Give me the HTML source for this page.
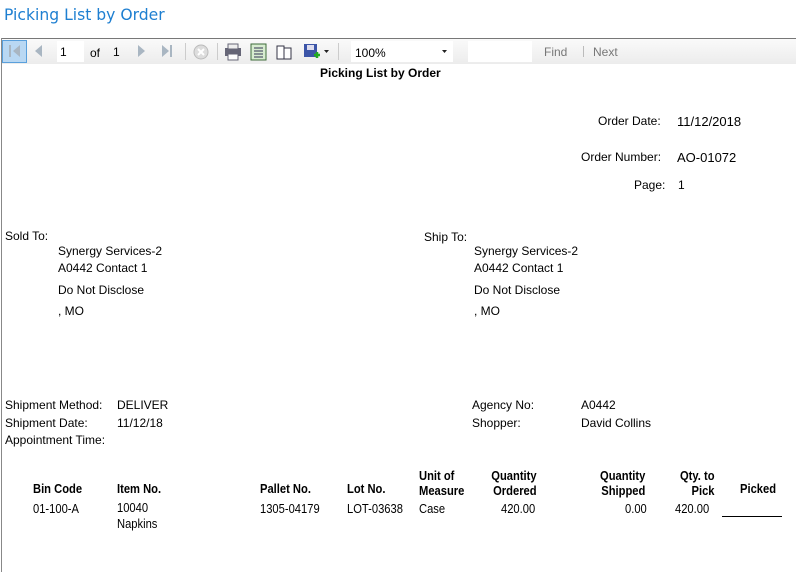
<!DOCTYPE html>
<html><head><meta charset="utf-8"><style>
body{margin:0;width:796px;height:572px;background:#fff;font-family:"Liberation Sans",Arial,sans-serif;position:relative;overflow:hidden;color:#000}
.a{position:absolute;white-space:nowrap}
.t{font-size:12px}
.n{font-size:13px;display:inline-block;transform:scaleX(.86);transform-origin:left top}
.nb{font-weight:bold}
</style></head><body>
<div class="a" style="left:4px;top:6px;color:#1e7fd1;font-family:'DejaVu Sans','Liberation Sans',sans-serif;font-size:15.6px">Picking List by Order</div>
<div class="a" style="left:1px;top:38px;width:795px;height:1px;background:#777"></div>
<div class="a" style="left:1px;top:38px;width:1px;height:534px;background:#888"></div>
<div class="a" style="left:2px;top:39px;width:794px;height:25px;background:linear-gradient(#fafafa,#ececec)"></div>
<div class="a" style="left:2px;top:40px;width:25px;height:23px;background:#b9d8f3;border:1px solid #5aa0dc;box-sizing:border-box"></div>
<svg class="a" style="left:0;top:39px" width="796" height="26">
<g fill="#a9b6c2"><rect x="9" y="6" width="2" height="12"/><path d="M20 6 L13 12 L20 18Z"/><path d="M42 6 L35 12 L42 18Z"/><path d="M138 6 L145 12 L138 18Z"/><path d="M162 6 L169 12 L162 18Z"/><rect x="170" y="6" width="2" height="12"/></g>
<rect x="57" y="2" width="27" height="21" fill="#fff"/>
<g stroke="#ccc"><line x1="185.5" y1="4" x2="185.5" y2="21"/><line x1="217.5" y1="4" x2="217.5" y2="21"/><line x1="338.5" y1="4" x2="338.5" y2="21"/></g>
<circle cx="201" cy="13" r="7" fill="#ddd" stroke="#bbb"/><path d="M198 10l6 6M204 10l-6 6" stroke="#fff" stroke-width="2"/>
<rect x="225" y="9" width="16" height="8" fill="#667" /><rect x="228" y="5" width="10" height="5" fill="#eee" stroke="#667"/><rect x="228" y="15" width="10" height="6" fill="#fff" stroke="#667"/>
<rect x="251" y="5" width="15" height="16" fill="#d7ecd0" stroke="#3d6b3a"/><path d="M254 9h9M254 12h9M254 15h9M254 18h9" stroke="#335"/>
<path d="M277 7h7v13h-7zM284 9h7v11h-7z" fill="#fff" stroke="#334"/>
<rect x="304" y="5" width="13" height="13" fill="#3c55a8"/><rect x="307" y="6" width="7" height="5" fill="#dde"/><path d="M314 16h6M317 13v6" stroke="#2a2" stroke-width="2.5"/>
<path d="M324 11h5l-2.5 3z" fill="#222"/>
<rect x="351" y="2" width="102" height="21" fill="#fff"/><path d="M442 11h5l-2.5 3z" fill="#222"/>
<rect x="468" y="2" width="64" height="21" fill="#fff"/>
<line x1="583.5" y1="7" x2="583.5" y2="18" stroke="#bbb"/>
</svg>
<div class="a t" style="left:60px;top:45px">1</div>
<div class="a t" style="left:90px;top:46px">of</div>
<div class="a t" style="left:113px;top:45px">1</div>
<div class="a t" style="left:355px;top:46px">100%</div>
<div class="a t" style="left:544px;top:45px;color:#777">Find</div>
<div class="a t" style="left:593px;top:45px;color:#777">Next</div>
<div class="a t nb" style="left:320px;top:66px">Picking List by Order</div>
<div class="a t" style="left:598px;top:114px">Order Date:</div>
<div class="a" style="left:677px;top:114px;font-size:13px">11/12/2018</div>
<div class="a t" style="left:581px;top:150px">Order Number:</div>
<div class="a" style="left:677px;top:150px;font-size:13px">AO-01072</div>
<div class="a t" style="left:634px;top:178px">Page:</div>
<div class="a t" style="left:678px;top:178px">1</div>
<div class="a t" style="left:5px;top:229px">Sold To:</div>
<div class="a t" style="left:58px;top:244px">Synergy Services-2</div>
<div class="a t" style="left:58px;top:261px">A0442 Contact 1</div>
<div class="a t" style="left:58px;top:283px">Do Not Disclose</div>
<div class="a t" style="left:58px;top:304px">, MO</div>
<div class="a t" style="left:424px;top:230px">Ship To:</div>
<div class="a t" style="left:474px;top:244px">Synergy Services-2</div>
<div class="a t" style="left:474px;top:261px">A0442 Contact 1</div>
<div class="a t" style="left:474px;top:283px">Do Not Disclose</div>
<div class="a t" style="left:474px;top:304px">, MO</div>
<div class="a t" style="left:5px;top:398px">Shipment Method:</div>
<div class="a t" style="left:117px;top:398px">DELIVER</div>
<div class="a t" style="left:5px;top:416px">Shipment Date:</div>
<div class="a t" style="left:117px;top:416px">11/12/18</div>
<div class="a t" style="left:5px;top:433px">Appointment Time:</div>
<div class="a t" style="left:472px;top:398px">Agency No:</div>
<div class="a t" style="left:581px;top:398px">A0442</div>
<div class="a t" style="left:472px;top:416px">Shopper:</div>
<div class="a t" style="left:581px;top:416px">David Collins</div>

<div class="a" style="left:33px;top:480px"><span class="n nb">Bin Code</span></div>
<div class="a" style="left:117px;top:480px"><span class="n nb">Item No.</span></div>
<div class="a" style="left:260px;top:480px"><span class="n nb">Pallet No.</span></div>
<div class="a" style="left:347px;top:480px"><span class="n nb">Lot No.</span></div>
<div class="a" style="left:419px;top:468px;line-height:15px"><span class="n nb">Unit of<br>Measure</span></div>
<div class="a" style="left:490px;top:468px;line-height:15px"><span class="n nb" style="text-align:right">Quantity<br>&nbsp;Ordered</span></div>
<div class="a" style="left:600px;top:468px;line-height:15px"><span class="n nb" style="text-align:right">Quantity<br>Shipped</span></div>
<div class="a" style="left:676px;top:468px;line-height:15px"><span class="n nb" style="text-align:right">Qty. to<br>&nbsp;&nbsp;&nbsp;&nbsp;&nbsp;Pick</span></div>
<div class="a" style="left:740px;top:480px"><span class="n nb">Picked</span></div>
<div class="a" style="left:33px;top:500px"><span class="n">01-100-A</span></div>
<div class="a" style="left:117px;top:500px;line-height:16px"><span class="n">10040<br>Napkins</span></div>
<div class="a" style="left:260px;top:500px"><span class="n">1305-04179</span></div>
<div class="a" style="left:347px;top:500px"><span class="n">LOT-03638</span></div>
<div class="a" style="left:419px;top:500px"><span class="n">Case</span></div>
<div class="a" style="left:501px;top:500px"><span class="n">420.00</span></div>
<div class="a" style="left:625px;top:500px"><span class="n">0.00</span></div>
<div class="a" style="left:675px;top:500px"><span class="n">420.00</span></div>
<div class="a" style="left:722px;top:516px;width:60px;height:1px;background:#000"></div>
</body></html>
